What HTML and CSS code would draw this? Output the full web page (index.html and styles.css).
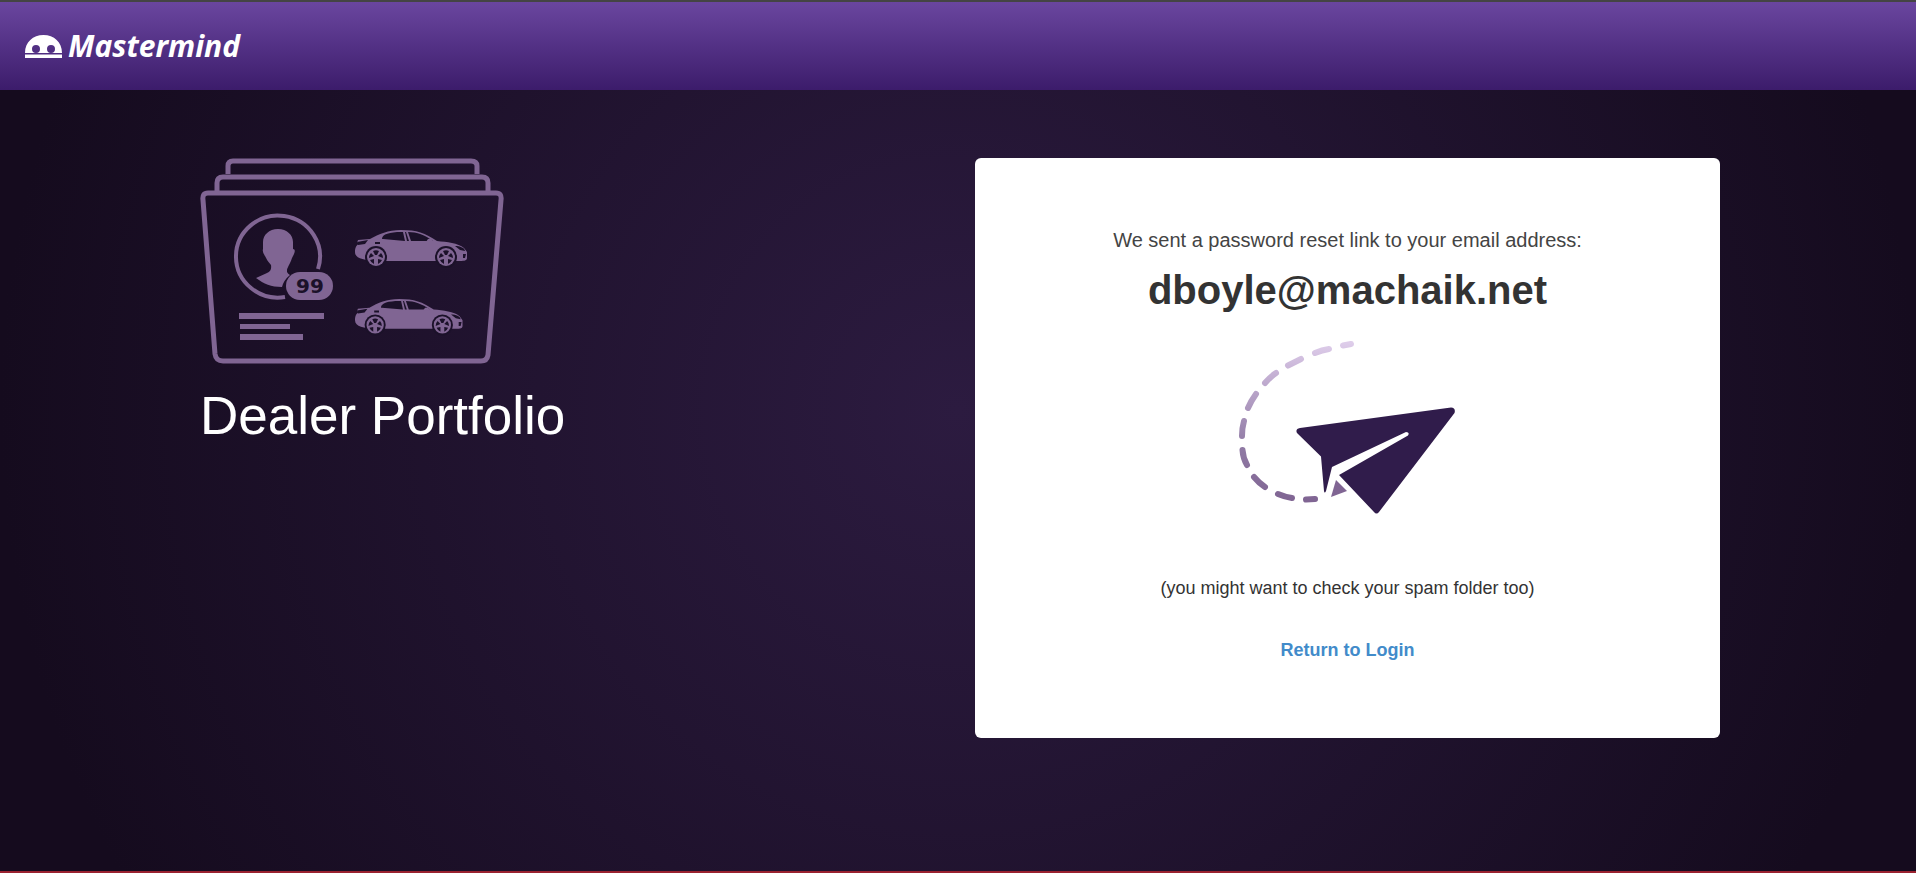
FILE: index.html
```html
<!DOCTYPE html>
<html lang="en">
<head>
    <meta charset="UTF-8">
    <meta name="viewport" content="width=device-width, initial-scale=1.0">
    <title>Mastermind</title>
    <link rel="stylesheet" href="styles.css">
</head>
<body>
    <header class="header">
        <svg class="logo-mark" viewBox="0 0 37 23" aria-hidden="true">
            <path fill="#fff" fill-rule="evenodd" d="M0 18C0 7 8 0 18.500 0S37 7 37 18ZM7 14a4 4 0 1 0 8 0a4 4 0 1 0-8 0ZM22 14a4 4 0 1 0 8 0a4 4 0 1 0-8 0Z"/>
            <path fill="#fff" d="M0 19.500h37v3.500H0z"/>
        </svg>
        <span class="logo-text">Mastermind</span>
    </header>

    <main class="content">
        <section class="product">
            <svg class="portfolio" viewBox="0 0 304 206" aria-hidden="true">
                <defs>
                    <g id="wheel">
                        <circle class="dark" r="11"/>
                        <circle class="fill" r="9"/>
                        <path class="dark" d="M-1-2-3-6A7 7 0 0 1 3-6L1-2ZM2-1 5-4A7 7 0 0 1 7 1ZM2 2 6 3A7 7 0 0 1 2 7ZM-2 2-6 3A7 7 0 0 0-2 7ZM-2-1-5-4A7 7 0 0 0-7 1Z"/>
                    </g>
                    <g id="car">
                        <path class="fill" d="M2 12 3 9 15 8C24 3 33-1 46-1 62-1 70 2 82 10 92 11 103 12 109 17L112 21V27C112 30 108 30 103 30H20C10 29 0 28 0 21 0 17 1 14 5 12Z"/>
                        <path class="dark" d="M27 8C27 3 35 1 46 1H48L50 10 28 8ZM50 1H51L54 10H52ZM53 1C62 1 70 4 78 10L56 10Z"/>
                        <path class="dark" d="M2 11 13 9 10 13 3 14ZM20 11h5v2h-5zM100 15C105 15 110 17 110 20L105 19ZM108 23h3l-1 4h-2z"/>
                        <path class="fill" d="M71 11 73 8h3l3 3Z"/>
                        <use href="#wheel" x="21" y="26"/>
                        <use href="#wheel" x="91" y="26"/>
                    </g>
                </defs>
                <path class="line" d="M28 16V8Q28 3 33 3H271Q277 3 277 8V16"/>
                <path class="line" d="M17 33V25Q17 19 23 19H282Q288 19 288 25V33"/>
                <path class="line" d="M8 35H296Q302 35 301 42L288 197Q287 203 281 203H23Q16 203 15 196L3 42Q2 35 8 35Z"/>
                <path class="ring" d="M118 111A42 41 0 1 0 85 139"/>
                <path class="fill" d="M77 71C86 71 92 77 92 84V91Q95 91 93 96L91 100C89 106 86 110 86 112V114Q87 116 89 117C84 121 82 125 81 129 70 129 63 126 55 120L66 115Q71 113 70 107C67 104 65 100 64 98Q61 94 62 91V84C62 77 68 71 77 71Z" transform="translate(1)"/>
                <rect class="fill" x="86" y="114" width="47" height="28" rx="14"/>
                <text class="score" x="110" y="135" text-anchor="middle">99</text>
                <path class="fill" d="M39 155h85v6H39zM40 166h50v5H40zM40 176h63v6H40z"/>
                <use href="#car" x="155" y="73"/>
                <g transform="translate(155 142) scale(.96)"><use href="#car"/></g>
            </svg>
            <h1 class="title">Dealer Portfolio</h1>
        </section>

        <section class="card">
            <p class="lead">We sent a password reset link to your email address:</p>
            <h2 class="email">dboyle@machaik.net</h2>
            <svg class="plane" viewBox="0 0 256 210" aria-hidden="true">
                <defs>
                    <linearGradient id="trail" gradientUnits="userSpaceOnUse" x1="0" y1="23" x2="0" y2="180">
                        <stop offset="0" stop-color="#decdea"/>
                        <stop offset=".2" stop-color="#c5b1d4"/>
                        <stop offset=".65" stop-color="#917ba5"/>
                        <stop offset="1" stop-color="#806593"/>
                    </linearGradient>
                </defs>
                <path class="dash" stroke="url(#trail)" d="M123 25.500 131 24M95 33Q102 30 109 29M68 45.500Q75 42 81 39M45 63Q50 57 56 53M28 88Q31 81 36 74M22 116Q22 108 24 101M22.500 130Q23 138 27 145M34 157Q39 163 45 167M58 174Q65 177 72 178M86 179.500 95 179"/>
                <path class="navy" d="M80 108 231 87.500Q236 88 234.500 93L159 192Q156.500 195 154 192L119 155 188 115.500Q190 112 186 112L112 147 106 171Q104.500 174 104 171L101 136.500 77 113Q75 109 80 108Z"/>
                <path fill="#806593" d="M116 160 127 171 111 177Z"/>
            </svg>
            <p class="hint">(you might want to check your spam folder too)</p>
            <a class="return" href="#">Return to Login</a>
        </section>
    </main>
</body>
</html>
```
FILE: styles.css
```css
* {
    box-sizing: border-box;
}

body {
    margin: 0;
    min-height: 100vh;
    display: flex;
    flex-direction: column;
    font-family: "Liberation Sans", Arial, sans-serif;
    color: #333;
    background: #150b1e radial-gradient(circle farthest-side at 50% 47%, #2c1b40 0%, #150b1e 100%);
    border-bottom: 2px solid #9a2230;
}

.header {
    display: flex;
    align-items: center;
    gap: 6px;
    height: 90px;
    padding: 0 25px;
    border-top: 2px solid #444;
    background: linear-gradient(#6a469f, #3c1c6b);
}

.logo-mark {
    width: 37px;
    height: 23px;
}

.logo-text {
    font-family: "Open Sans", sans-serif;
    font-size: 30px;
    font-weight: 700;
    font-style: italic;
    line-height: 40px;
    color: #fff;
}

.content {
    display: grid;
    grid-template-columns: 1fr 1fr;
    gap: 30px;
    align-items: start;
    padding: 68px 196px 40px 200px;
}

.portfolio {
    display: block;
    width: 304px;
    height: 206px;
}

.portfolio .fill {
    fill: #806593;
}

.portfolio .dark {
    fill: #1b1129;
}

.portfolio .line,
.portfolio .ring {
    fill: none;
    stroke: #806593;
    stroke-width: 5;
}

.portfolio .ring {
    stroke-width: 4;
}

.score {
    font-family: "DejaVu Sans", sans-serif;
    font-size: 20px;
    font-weight: 700;
    fill: #1b1129;
}

.title {
    margin: 20px 0 0;
    font-size: 53px;
    font-weight: 400;
    line-height: 64px;
    color: #fff;
}

.card {
    display: flex;
    flex-direction: column;
    align-items: center;
    padding: 70px 20px 76px;
    border-radius: 6px;
    background: #fff;
}

.lead {
    margin: 0;
    font-size: 20px;
    line-height: 24px;
    color: #444;
}

.email {
    margin: 16px 0 8px;
    font-size: 40px;
    line-height: 44px;
    text-align: center;
}

.plane {
    width: 256px;
    height: 210px;
}

.dash {
    fill: none;
    stroke-width: 6;
    stroke-linecap: round;
}

.navy {
    fill: #301c4b;
}

.hint {
    margin: 46px 0 38px;
    font-size: 18px;
    line-height: 24px;
}

.return {
    font-size: 18px;
    font-weight: 700;
    line-height: 24px;
    color: #428bca;
    text-decoration: none;
}
```
